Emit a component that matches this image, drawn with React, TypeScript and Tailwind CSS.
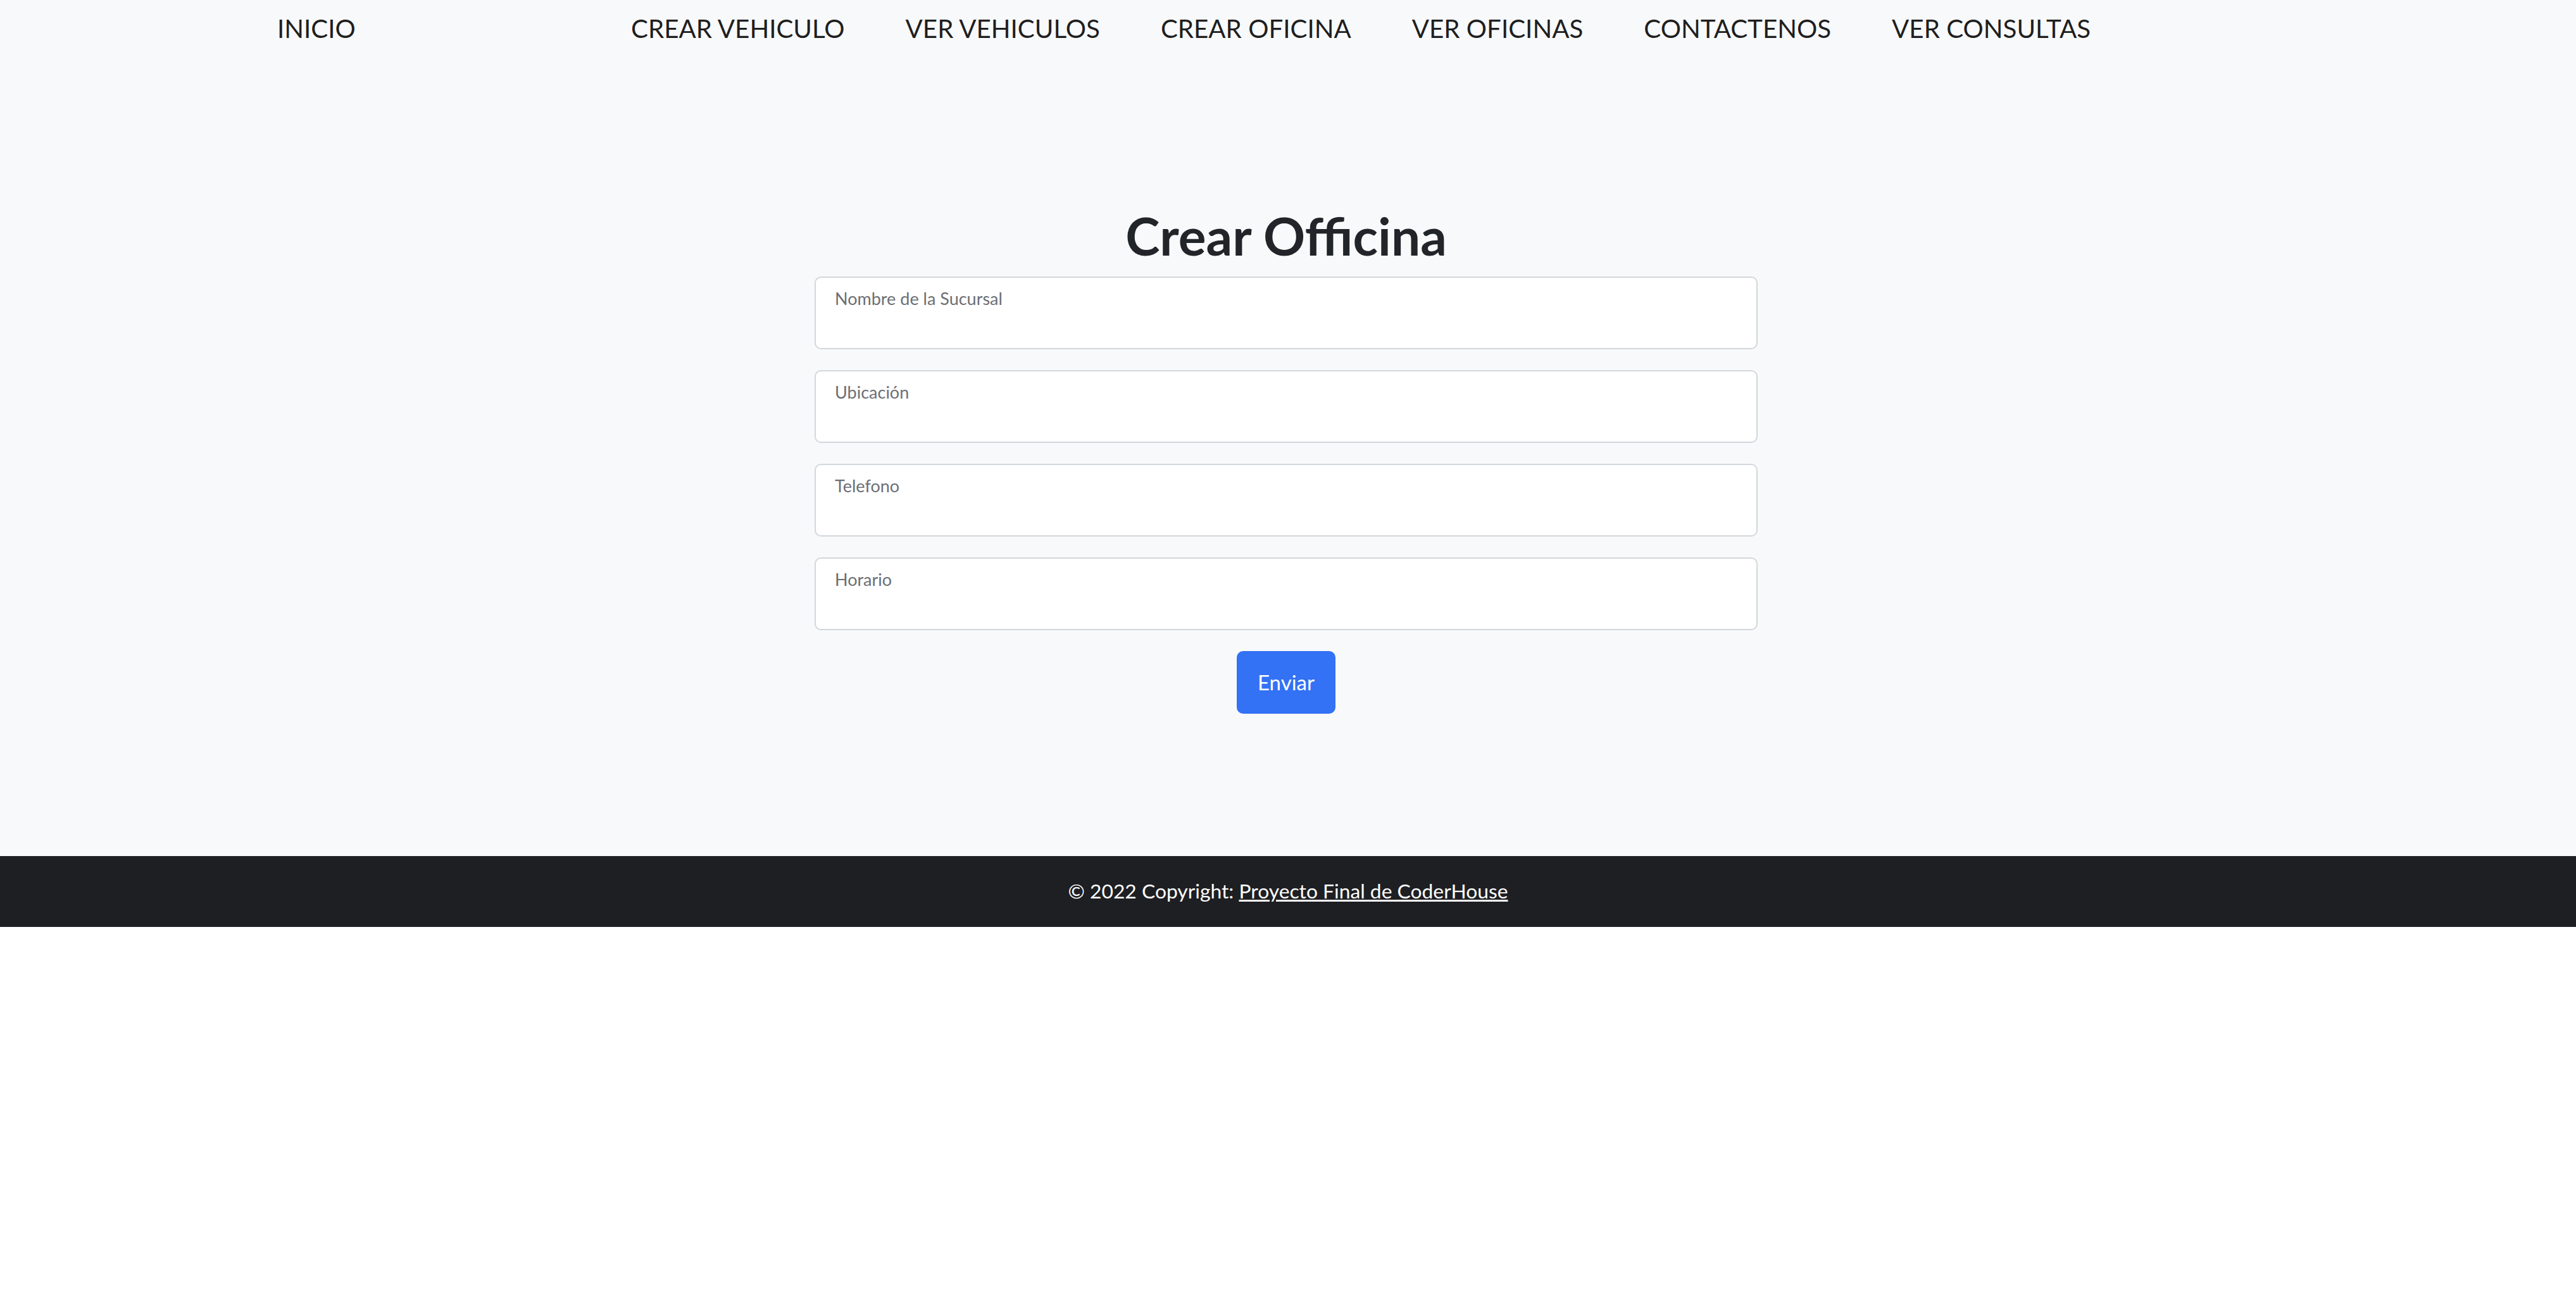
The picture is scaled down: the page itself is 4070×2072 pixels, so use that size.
import React from 'react';

const navLinks = ['CREAR VEHICULO', 'VER VEHICULOS', 'CREAR OFICINA', 'VER OFICINAS', 'CONTACTENOS', 'VER CONSULTAS'];

const fields = ['Nombre de la Sucursal', 'Ubicación', 'Telefono', 'Horario'];

const FloatingField: React.FC<{ label: string }> = ({ label }) => (
  <div className="h-[115px] w-full rounded-[10px] border-2 border-[#d3d7dc] bg-white pl-[30px] pt-[17px]">
    <label className="block text-[27px] leading-[1.2] text-[#6c6f73]">{label}</label>
  </div>
);

const App: React.FC = () => {
  return (
    <div className="w-full font-['Lato','Liberation_Sans',sans-serif]">
      <div className="bg-[#f8f9fa] pb-[225px]">
        <nav className="flex items-start pt-[15px] text-[40.3px] leading-[1.5] text-black/90">
          <a className="ml-[438px] w-[123px]">INICIO</a>
          <div className="ml-[436px] flex gap-[96px]">
            {navLinks.map(link => (
              <a key={link}>{link}</a>
            ))}
          </div>
        </nav>

        <main className="flex flex-col items-center pr-[6px] pt-[248px]">
          <h1 className="mb-[15px] text-[82px] font-bold leading-[1.2] text-[#212529]">Crear Officina</h1>
          <form className="flex w-[1490px] flex-col gap-[33px]">
            {fields.map(f => (
              <FloatingField key={f} label={f} />
            ))}
            <button
              type="button"
              className="flex h-[99px] w-[156px] items-center justify-center self-center rounded-[10px] bg-[#3371f5] text-[33px] text-white"
            >
              Enviar
            </button>
          </form>
        </main>
      </div>

      <footer className="flex h-[112px] items-center justify-center bg-[#1e1f23] text-[31.8px] leading-[1.5] text-white">
        <span>
          © 2022 Copyright: <a className="underline">Proyecto Final de CoderHouse</a>
        </span>
      </footer>
    </div>
  );
};

export default App;
